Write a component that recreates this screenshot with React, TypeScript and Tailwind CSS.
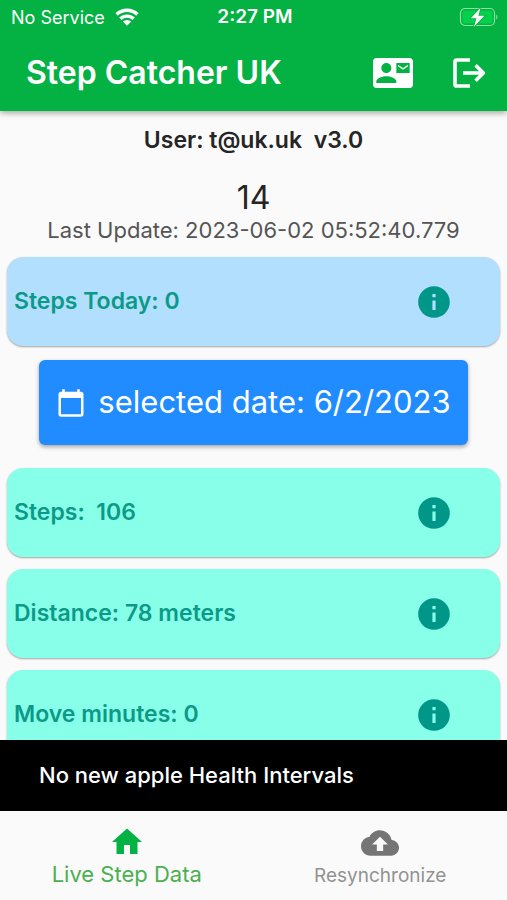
import {
	MdCalendarToday,
	MdCloudUpload,
	MdContactMail,
	MdHome,
	MdInfo,
} from "react-icons/md";

const WifiIcon = () => (
	<svg viewBox="0 0 24 18" className="h-[18px] w-6" aria-hidden="true">
		<g fill="none" stroke="currentColor" strokeWidth="3.4">
			<path d="M1.6 6.4a15 15 0 0 1 20.8 0" />
			<path d="M5.4 10.8a9.4 9.4 0 0 1 13.2 0" />
		</g>
		<path d="M12 17.8l-4.2-4.2a6 6 0 0 1 8.4 0z" fill="currentColor" />
	</svg>
);

const BatteryIcon = () => (
	<svg viewBox="0 0 40 20" className="h-5 w-10" aria-hidden="true">
		<rect x="1.5" y="1.5" width="34" height="17" rx="4.5" fill="none" stroke="#8fdca5" strokeWidth="1.2" />
		<rect x="3.5" y="3.5" width="30" height="13" rx="2.5" fill="#04d14b" />
		<path d="M37.2 7.5c1.6.8 1.6 4.2 0 5z" fill="#8fdca5" />
		<path d="M21.5 .8L11.8 11.2h5.7l-2.6 8.6L25.4 8.8h-6z" fill="#fff" stroke="#04b143" strokeWidth="1.6" paintOrder="stroke" />
	</svg>
);

const LogoutIcon = () => (
	<svg viewBox="0 0 36 36" className="size-9" fill="none" stroke="currentColor" strokeWidth="3.6" strokeLinejoin="round" aria-hidden="true">
		<path d="M19 5H5.6a1.6 1.6 0 0 0-1.6 1.6v22.8A1.6 1.6 0 0 0 5.6 31H19" />
		<path d="M12 18h20" />
		<path d="M24.6 10.2L32.4 18l-7.8 7.8" />
	</svg>
);

const StatusBar = () => {
	return (
		<div className="grid h-[34px] grid-cols-3 items-center pl-[11px] pr-2">
			<div className="flex items-center gap-[10px] whitespace-nowrap text-[18px]">
				No Service
				<WifiIcon />
			</div>
			<span className="text-center text-[19px] font-semibold">2:27 PM</span>
			<div className="flex justify-end">
				<BatteryIcon />
			</div>
		</div>
	);
};

const Header = () => {
	return (
		<header className="relative z-10 bg-[#04b143] text-white shadow-[0_2px_6px_rgba(0,0,0,0.35)]">
			<StatusBar />
			<div className="flex h-[77px] items-center pl-[26px] pr-5">
				<h1 className="text-[32px] font-semibold">Step Catcher UK</h1>
				<div className="ml-auto flex items-center gap-[38px]">
					<button type="button" aria-label="Contact">
						<MdContactMail className="size-10" />
					</button>
					<button type="button" aria-label="Log out">
						<LogoutIcon />
					</button>
				</div>
			</div>
		</header>
	);
};

type CardProps = {
	text: string;
	color?: string;
};

const StatCard = ({ text, color = "bg-[#88ffe8]" }: CardProps) => {
	return (
		<section
			className={`flex h-[89px] shrink-0 items-center justify-between rounded-2xl pl-[7px] pr-[47px] text-[#0c9a88] shadow-[0_1px_2px_rgba(0,0,0,0.35)] ${color}`}
		>
			<p className="whitespace-pre text-[23px] font-semibold">{text}</p>
			<button type="button" aria-label={`About ${text}`}>
				<MdInfo className="size-[38px] text-[#009688]" />
			</button>
		</section>
	);
};

const BottomNav = () => {
	return (
		<nav className="grid h-[89px] shrink-0 grid-cols-2 bg-[#fafafa]">
			<a href="#live" className="flex flex-col items-center pt-[13px] text-[#4caf50]">
				<MdHome className="size-9 text-[#04b143]" />
				<span className="text-[22px] leading-7">Live Step Data</span>
			</a>
			<a href="#sync" className="flex flex-col items-center pt-[13px] text-[#929292]">
				<MdCloudUpload className="size-[38px] text-[#757575]" />
				<span className="text-[19px] leading-7">Resynchronize</span>
			</a>
		</nav>
	);
};

const App = () => {
	return (
		<div className="flex h-screen flex-col overflow-hidden bg-[#fafafa] font-['Inter',sans-serif]">
			<Header />
			<main className="flex min-h-0 flex-1 flex-col overflow-hidden px-[7px]">
				<div className="pt-[13px] text-center text-[#252525]">
					<p className="whitespace-pre text-[23px] font-semibold leading-8">User: t@uk.uk  v3.0</p>
					<p className="mt-6 text-[32px] leading-9">14</p>
					<p className="text-[22px] leading-7 text-[#555555]">Last Update: 2023-06-02 05:52:40.779</p>
				</div>
				<div className="mt-[13px] flex flex-col">
					<StatCard text="Steps Today: 0" color="bg-[#b1dffd]" />
				</div>
				<button
					type="button"
					className="mx-8 mt-[14px] flex h-[85px] shrink-0 items-center justify-center gap-3 whitespace-nowrap rounded-md bg-[#208cff] text-[31px] text-white shadow-[0_2px_4px_rgba(0,0,0,0.35)]"
				>
					<MdCalendarToday className="size-[30px]" />
					selected date: 6/2/2023
				</button>
				<div className="mt-[23px] flex flex-col gap-3">
					<StatCard text="Steps:  106" />
					<StatCard text="Distance: 78 meters" />
					<StatCard text="Move minutes: 0" />
				</div>
			</main>
			<div role="status" className="flex h-[71px] shrink-0 items-center bg-black px-[39px] text-[22px] font-medium text-white">
				No new apple Health Intervals
			</div>
			<BottomNav />
		</div>
	);
};

export default App;
